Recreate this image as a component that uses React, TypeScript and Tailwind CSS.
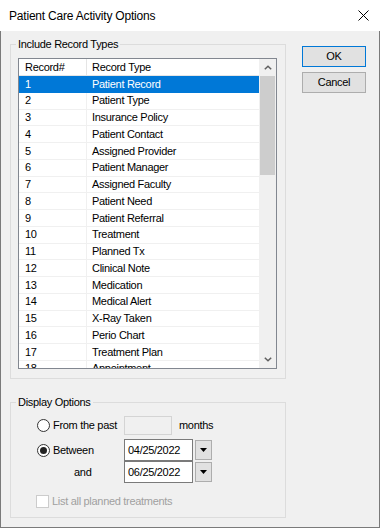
import React from "react";

const rows: [string, string][] = [
  ["1", "Patient Record"],
  ["2", "Patient Type"],
  ["3", "Insurance Policy"],
  ["4", "Patient Contact"],
  ["5", "Assigned Provider"],
  ["6", "Patient Manager"],
  ["7", "Assigned Faculty"],
  ["8", "Patient Need"],
  ["9", "Patient Referral"],
  ["10", "Treatment"],
  ["11", "Planned Tx"],
  ["12", "Clinical Note"],
  ["13", "Medication"],
  ["14", "Medical Alert"],
  ["15", "X-Ray Taken"],
  ["16", "Perio Chart"],
  ["17", "Treatment Plan"],
  ["18", "Appointment"],
];

function Radio({ checked }: { checked?: boolean }) {
  return (
    <svg width="13" height="13" viewBox="0 0 13 13" className="shrink-0">
      <circle cx="6.5" cy="6.5" r="6" fill="#ffffff" stroke="#333333" strokeWidth="1" />
      {checked && <circle cx="6.5" cy="6.5" r="3.5" fill="#222222" />}
    </svg>
  );
}

function DropBtn() {
  return (
    <div className="ml-[2px] w-[17px] h-[20px] bg-[#e1e1e1] border border-[#adadad] flex items-center justify-center">
      <svg width="7" height="4" viewBox="0 0 7 4">
        <path d="M0 0 L7 0 L3.5 4 Z" fill="#000000" />
      </svg>
    </div>
  );
}

export default function App() {
  return (
    <div
      className="w-[380px] h-[528px] flex flex-col text-[11px] tracking-[-0.3px] text-black overflow-hidden"
      style={{ fontFamily: '"Liberation Sans", Arial, sans-serif' }}
    >
      {/* Title bar */}
      <div className="h-[31px] bg-white flex items-center justify-between pl-[9px] pr-[11px] shrink-0">
        <span className="text-[12px] tracking-[-0.2px]">Patient Care Activity Options</span>
        <svg width="11" height="11" viewBox="0 0 11 11">
          <path d="M0.5 0.5 L10.5 10.5 M10.5 0.5 L0.5 10.5" stroke="#000000" strokeWidth="1" />
        </svg>
      </div>

      {/* Body */}
      <div className="flex-1 bg-[#f0f0f0] border-l border-r border-b border-[#7a7a7a] flex">
        <div className="pl-[9px] pt-[13px] flex flex-col">
          {/* Group 1 */}
          <div className="relative w-[276px] h-[335px] border border-[#dcdcdc] pt-[13px] pl-[7px]">
            <span className="absolute -top-[8px] left-[5px] bg-[#f0f0f0] px-[2px] leading-[14px]">
              Include Record Types
            </span>
            <div className="w-[259px] h-[311px] border border-[#828790] bg-white flex overflow-hidden">
              <div className="w-[240px] flex flex-col">
                {/* header */}
                <div className="h-[17px] shrink-0 flex border-b border-[#e5e5e5] bg-white">
                  <div className="w-[68px] border-r border-[#e5e5e5] pl-[6px] flex items-center">Record#</div>
                  <div className="flex-1 pl-[5px] flex items-center">Record Type</div>
                </div>
                {rows.map(([n, t], i) => (
                  <div
                    key={n}
                    className={
                      "h-[16.75px] shrink-0 flex " +
                      (i === 0 ? "bg-[#0078d7] text-white" : "border-b border-[#f0f0f0]")
                    }
                  >
                    <div
                      className={
                        "w-[68px] pl-[6px] flex items-center " + (i === 0 ? "" : "border-r border-[#f0f0f0]")
                      }
                    >
                      {n}
                    </div>
                    <div className="flex-1 pl-[5px] flex items-center whitespace-nowrap">{t}</div>
                  </div>
                ))}
              </div>
              {/* scrollbar */}
              <div className="w-[17px] bg-[#f0f0f0] flex flex-col">
                <div className="h-[17px] flex items-center justify-center shrink-0">
                  <svg width="8" height="5" viewBox="0 0 8 5">
                    <path d="M0.8 4.3 L4 1.2 L7.2 4.3" stroke="#606060" strokeWidth="1.5" fill="none" />
                  </svg>
                </div>
                <div className="h-[99px] mx-[1px] bg-[#cdcdcd] shrink-0" />
                <div className="flex-1" />
                <div className="h-[17px] flex items-center justify-center shrink-0">
                  <svg width="8" height="5" viewBox="0 0 8 5">
                    <path d="M0.8 0.7 L4 3.8 L7.2 0.7" stroke="#606060" strokeWidth="1.5" fill="none" />
                  </svg>
                </div>
              </div>
            </div>
          </div>

          {/* Group 2 */}
          <div className="relative mt-[23px] w-[276px] h-[116px] border border-[#dcdcdc] pt-[13px] flex flex-col">
            <span className="absolute -top-[8px] left-[5px] bg-[#f0f0f0] px-[2px] leading-[14px]">
              Display Options
            </span>
            {/* From the past */}
            <div className="h-[19px] flex items-center">
              <div className="w-[113px] pl-[26px] flex items-center gap-[3px]">
                <Radio />
                <span>From the past</span>
              </div>
              <div className="w-[48px] h-[19px] bg-[#f0f0f0] border border-[#d4d4d4]" />
              <span className="ml-[7px]">months</span>
            </div>
            {/* Between */}
            <div className="mt-[4px] h-[22px] flex items-center">
              <div className="w-[113px] pl-[26px] flex items-center gap-[3px]">
                <Radio checked />
                <span>Between</span>
              </div>
              <div className="w-[69px] h-[22px] bg-white border border-[#7a7a7a] flex items-center pl-[3px]">
                04/25/2022
              </div>
              <DropBtn />
            </div>
            {/* and */}
            <div className="h-[22px] flex items-center">
              <div className="w-[113px] pl-[63px] flex items-center">
                <span>and</span>
              </div>
              <div className="w-[69px] h-[22px] bg-white border border-[#7a7a7a] flex items-center pl-[3px]">
                06/25/2022
              </div>
              <DropBtn />
            </div>
            {/* checkbox */}
            <div className="mt-[12px] h-[13px] pl-[25px] flex items-center gap-[3px] text-[#a0a0a0]">
              <div className="w-[13px] h-[13px] bg-white border border-[#cccccc] shrink-0" />
              <span>List all planned treatments</span>
            </div>
          </div>
        </div>

        {/* Buttons */}
        <div className="ml-[16px] pt-[15px] flex flex-col gap-[5px]">
          <div className="w-[64px] h-[21px] bg-[#e1e1e1] border border-[#0078d7] flex items-center justify-center">
            OK
          </div>
          <div className="w-[64px] h-[21px] bg-[#e1e1e1] border border-[#adadad] flex items-center justify-center">
            Cancel
          </div>
        </div>
      </div>
    </div>
  );
}
